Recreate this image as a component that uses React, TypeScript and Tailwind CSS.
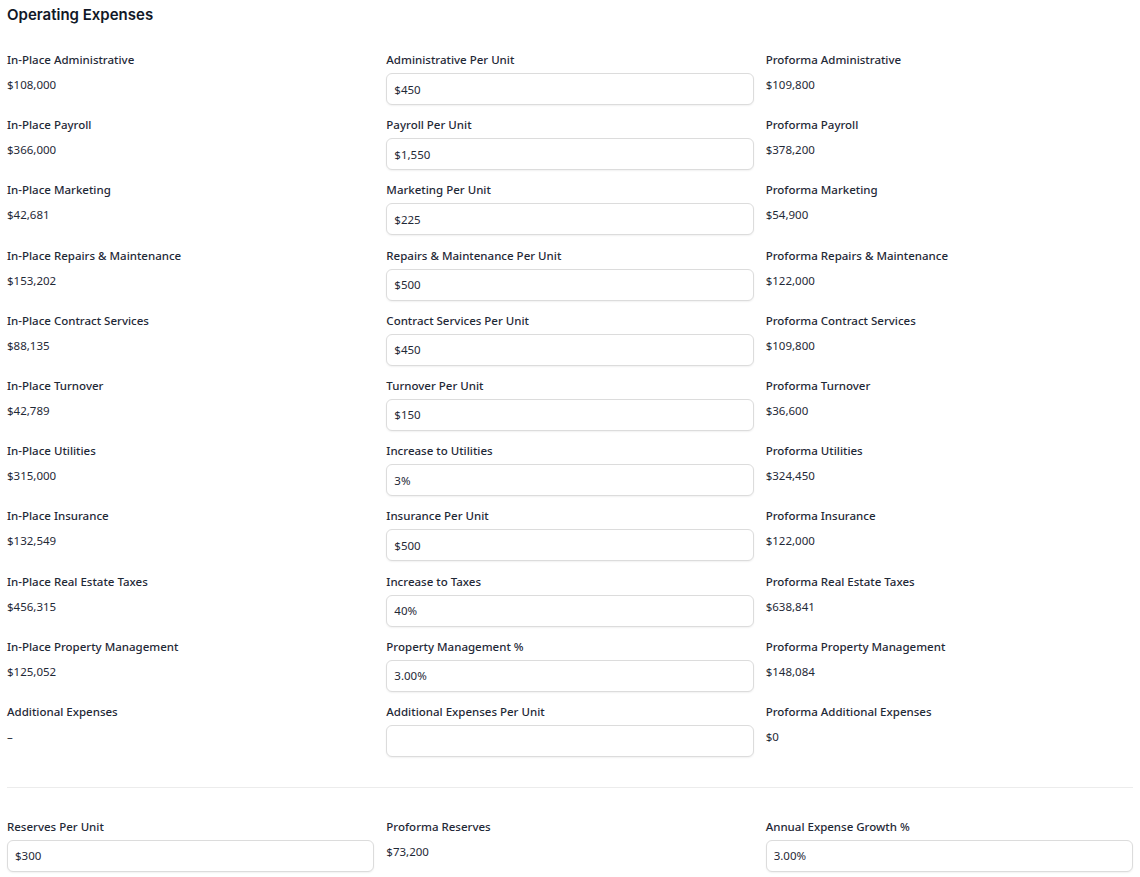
import React from "react";

type Row = {
  left: string;
  leftValue: string;
  mid: string;
  midValue: string;
  right: string;
  rightValue: string;
};

const rows: Row[] = [
  { left: "In-Place Administrative", leftValue: "$108,000", mid: "Administrative Per Unit", midValue: "$450", right: "Proforma Administrative", rightValue: "$109,800" },
  { left: "In-Place Payroll", leftValue: "$366,000", mid: "Payroll Per Unit", midValue: "$1,550", right: "Proforma Payroll", rightValue: "$378,200" },
  { left: "In-Place Marketing", leftValue: "$42,681", mid: "Marketing Per Unit", midValue: "$225", right: "Proforma Marketing", rightValue: "$54,900" },
  { left: "In-Place Repairs & Maintenance", leftValue: "$153,202", mid: "Repairs & Maintenance Per Unit", midValue: "$500", right: "Proforma Repairs & Maintenance", rightValue: "$122,000" },
  { left: "In-Place Contract Services", leftValue: "$88,135", mid: "Contract Services Per Unit", midValue: "$450", right: "Proforma Contract Services", rightValue: "$109,800" },
  { left: "In-Place Turnover", leftValue: "$42,789", mid: "Turnover Per Unit", midValue: "$150", right: "Proforma Turnover", rightValue: "$36,600" },
  { left: "In-Place Utilities", leftValue: "$315,000", mid: "Increase to Utilities", midValue: "3%", right: "Proforma Utilities", rightValue: "$324,450" },
  { left: "In-Place Insurance", leftValue: "$132,549", mid: "Insurance Per Unit", midValue: "$500", right: "Proforma Insurance", rightValue: "$122,000" },
  { left: "In-Place Real Estate Taxes", leftValue: "$456,315", mid: "Increase to Taxes", midValue: "40%", right: "Proforma Real Estate Taxes", rightValue: "$638,841" },
  { left: "In-Place Property Management", leftValue: "$125,052", mid: "Property Management %", midValue: "3.00%", right: "Proforma Property Management", rightValue: "$148,084" },
  { left: "Additional Expenses", leftValue: "–", mid: "Additional Expenses Per Unit", midValue: "", right: "Proforma Additional Expenses", rightValue: "$0" },
];

function Label({ children }: { children: React.ReactNode }) {
  return <div className="mb-[5px] text-[11.5px] leading-4 font-medium text-[#1f2937]">{children}</div>;
}

function Value({ label, value }: { label: string; value: string }) {
  return (
    <div>
      <Label>{label}</Label>
      <div className="mt-[7px] text-[11.5px] leading-5 text-[#1f2937]">{value}</div>
    </div>
  );
}

function Field({ label, value }: { label: string; value: string }) {
  return (
    <div>
      <Label>{label}</Label>
      <input
        readOnly
        value={value}
        className="block h-8 w-full rounded-md border border-[#dcdcdc] bg-white px-[7px] text-[11.5px] text-[#1f2937] shadow-[0_1px_2px_rgba(0,0,0,0.06)] outline-none"
        style={{ fontFamily: "'Noto Sans', sans-serif" }}
      />
    </div>
  );
}

export default function App() {
  return (
    <div className="bg-white px-[7px] pt-[3px] pb-1 text-[#1f2937]" style={{ fontFamily: "'Noto Sans', sans-serif" }}>
      <h2 className="text-[15px] leading-6 font-semibold text-[#111827]" style={{ fontFamily: "Inter, sans-serif" }}>
        Operating Expenses
      </h2>
      <div className="mt-[25px] grid grid-cols-3 gap-x-3 gap-y-[12.2px]">
        {rows.map((r) => (
          <React.Fragment key={r.left}>
            <Value label={r.left} value={r.leftValue} />
            <Field label={r.mid} value={r.midValue} />
            <Value label={r.right} value={r.rightValue} />
          </React.Fragment>
        ))}
      </div>
      <div className="mt-[30px] border-t border-[#ececec]" />
      <div className="mt-[31px] grid grid-cols-3 gap-x-3">
        <Field label="Reserves Per Unit" value="$300" />
        <Value label="Proforma Reserves" value="$73,200" />
        <Field label="Annual Expense Growth %" value="3.00%" />
      </div>
    </div>
  );
}
